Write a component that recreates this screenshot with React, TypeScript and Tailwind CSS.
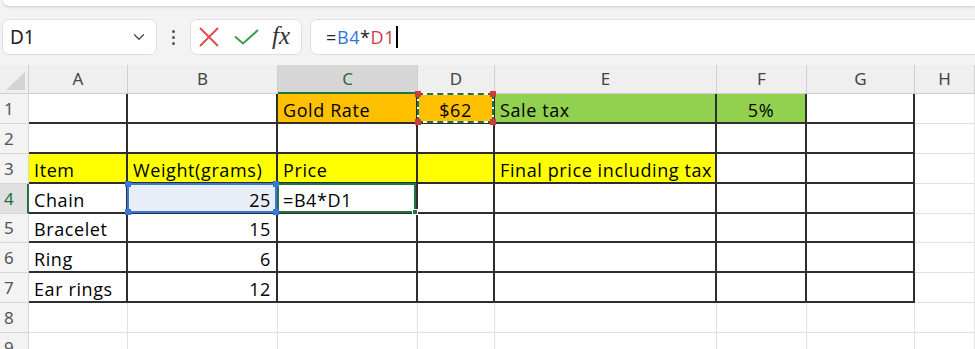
import { ChevronDown } from 'lucide-react';

type Cell = { text?: string; bg?: string; align?: 'left' | 'right' | 'center' };

const COLS = ['A', 'B', 'C', 'D', 'E', 'F', 'G', 'H'];
const BORDERED = ['A', 'B', 'C', 'D', 'E', 'F', 'G'];

// sheet contents, row -> column -> cell
const SHEET: Record<number, Record<string, Cell>> = {
  1: {
    C: { text: 'Gold Rate', bg: 'bg-[#ffc000]' },
    D: { text: '$62', bg: 'bg-[#ffc000]', align: 'center' },
    E: { text: 'Sale tax', bg: 'bg-[#92d050]' },
    F: { text: '5%', bg: 'bg-[#92d050]', align: 'center' },
  },
  3: {
    A: { text: 'Item', bg: 'bg-[#ffff00]' },
    B: { text: 'Weight(grams)', bg: 'bg-[#ffff00]' },
    C: { text: 'Price', bg: 'bg-[#ffff00]' },
    D: { bg: 'bg-[#ffff00]' },
    E: { text: 'Final price including tax', bg: 'bg-[#ffff00]' },
  },
  4: {
    A: { text: 'Chain' },
    B: { text: '25', bg: 'bg-[#e8eef8]', align: 'right' },
    C: { text: '=B4*D1' },
  },
  5: { A: { text: 'Bracelet' }, B: { text: '15', align: 'right' } },
  6: { A: { text: 'Ring' }, B: { text: '6', align: 'right' } },
  7: { A: { text: 'Ear rings' }, B: { text: '12', align: 'right' } },
};

function Corners({ color }: { color: string }) {
  return (
    <>
      <span className={`absolute -left-[4px] -top-[4px] w-[6px] h-[6px] ${color}`} />
      <span className={`absolute -right-[4px] -top-[4px] w-[6px] h-[6px] ${color}`} />
      <span className={`absolute -left-[4px] -bottom-[4px] w-[6px] h-[6px] ${color}`} />
      <span className={`absolute -right-[4px] -bottom-[4px] w-[6px] h-[6px] ${color}`} />
    </>
  );
}

function SheetCell({ row, col }: { row: number; col: string }) {
  const cell = SHEET[row]?.[col] ?? {};
  const boxed = row <= 7 && BORDERED.includes(col);
  const align =
    cell.align === 'right' ? 'justify-end' : cell.align === 'center' ? 'justify-center' : 'justify-start';

  return (
    <div
      className={`relative flex items-end pb-[1px] px-[5px] leading-[22px] whitespace-nowrap ${align} ${
        cell.bg ?? 'bg-white'
      } ${boxed ? 'border-r-2 border-b-2 border-[#2e2e2e]' : 'border-r border-b border-[#e1e1e1]'}`}
    >
      {cell.text}

      {row === 4 && col === 'B' && (
        <div className="absolute -left-[1px] -top-[1px] -right-[1px] -bottom-[1px] border-2 border-[#3a77d6] z-20">
          <Corners color="bg-[#3a77d6]" />
        </div>
      )}
      {row === 4 && col === 'C' && (
        <div className="absolute -left-[1px] -top-[1px] right-0 -bottom-[1px] border-2 border-[#217346] z-10">
          <span className="absolute -right-[4px] -bottom-[4px] w-[6px] h-[6px] bg-[#217346] border border-white" />
        </div>
      )}
      {row === 1 && col === 'D' && (
        <>
          <div className="absolute -left-[1px] -top-[1px] -right-[1px] -bottom-[1px] border-2 border-white z-10" />
          <div className="absolute -left-[1px] -top-[1px] -right-[1px] -bottom-[1px] border-2 border-dashed border-[#217346] z-10">
            <Corners color="bg-[#d13a3f]" />
          </div>
        </>
      )}
    </div>
  );
}

function FormulaBar() {
  return (
    <div className="bg-[#f3f3f3] overflow-hidden">
      <div className="ml-[3px] h-[6px] bg-white rounded-bl-[8px] shadow-[0_1px_3px_rgba(0,0,0,0.18)]" />
      <div className="h-[13px]" />
      <div className="flex h-[36px]">
        <div className="ml-[2px] w-[155px] shrink-0 flex items-center justify-between pl-[7px] pr-[8px] bg-white border border-[#dedede] rounded-[7px]">
          <span className="text-[19px] text-[#1f1f1f] font-['Noto_Sans',sans-serif]">D1</span>
          <ChevronDown size={18} strokeWidth={1.6} className="text-[#444]" />
        </div>
        <div className="w-[33px] shrink-0 flex flex-col items-center justify-center gap-[3px]">
          <span className="w-[3px] h-[3px] rounded-full bg-[#555]" />
          <span className="w-[3px] h-[3px] rounded-full bg-[#555]" />
          <span className="w-[3px] h-[3px] rounded-full bg-[#555]" />
        </div>
        <div className="w-[112px] shrink-0 flex items-center pl-[8px] bg-white border border-[#dedede] rounded-[7px]">
          <svg width="20" height="20" viewBox="0 0 20 20">
            <path d="M1 1 L19 19 M19 1 L1 19" stroke="#e2464b" strokeWidth="1.8" />
          </svg>
          <svg width="25" height="16" viewBox="0 0 25 16" className="ml-[15px]">
            <path d="M1 7.5 L9 14.5 L24 1" stroke="#3c9c4c" strokeWidth="2" fill="none" />
          </svg>
          <span className="ml-[13px] -mt-[3px] text-[25px] italic text-[#333] font-['Liberation_Serif',serif]">fx</span>
        </div>
        <div className="ml-[8px] w-[720px] shrink-0 flex items-center pl-[15px] bg-white border border-[#dedede] rounded-[7px] text-[18px] tracking-[0.6px] font-['Open_Sans',sans-serif]">
          <span className="text-[#222]">=</span>
          <span className="text-[#2f75d6]">B4</span>
          <span className="text-[#222]">*</span>
          <span className="text-[#d13a3f]">D1</span>
          <span className="ml-[1px] w-[2px] h-[22px] bg-black" />
        </div>
      </div>
      <div className="h-[10px]" />
    </div>
  );
}

export default function App() {
  const rows = [1, 2, 3, 4, 5, 6, 7, 8, 9];

  return (
    <div className="w-[975px] h-[349px] overflow-hidden bg-white">
      <FormulaBar />
      <div className="grid grid-cols-[29px_99px_150px_140px_77px_222px_90px_108px_60px] grid-rows-[29px_30px_30px_30px_30px_29px_30px_30px_30px_30px] text-[18px] tracking-[0.6px] text-black font-['Open_Sans',sans-serif]">
        {/* corner */}
        <div className="relative bg-[#efefef] border-r border-b border-[#cfcfcf]">
          <svg className="absolute left-0 top-0" width="29" height="29" viewBox="0 0 29 29">
            <polygon points="6,25 25,25 25,7" fill="#d4d4d4" />
          </svg>
        </div>
        {COLS.map(c => (
          <div
            key={c}
            className={`flex items-center justify-center text-[17px] tracking-normal font-['Noto_Sans',sans-serif] border-r ${
              c === 'C'
                ? 'bg-[#d6d6d6] text-[#1e6e3e] border-b-2 border-b-[#217346] border-r-[#cfcfcf]'
                : 'bg-[#efefef] text-[#444] border-b border-[#cfcfcf]'
            }`}
          >
            {c}
          </div>
        ))}

        {rows.map(r => (
          <div key={r} className="contents">
            <div
              className={`flex items-center pl-[4px] text-[17px] tracking-normal font-['Noto_Sans',sans-serif] border-b ${
                r === 4
                  ? 'bg-[#e0e0e0] text-[#1e6e3e] border-r-2 border-r-[#217346] border-b-[#d6d6d6]'
                  : 'bg-[#f3f3f3] text-[#555] border-r border-[#d6d6d6]'
              }`}
            >
              {r}
            </div>
            {COLS.map(c => (
              <SheetCell key={c} row={r} col={c} />
            ))}
          </div>
        ))}
      </div>
    </div>
  );
}
